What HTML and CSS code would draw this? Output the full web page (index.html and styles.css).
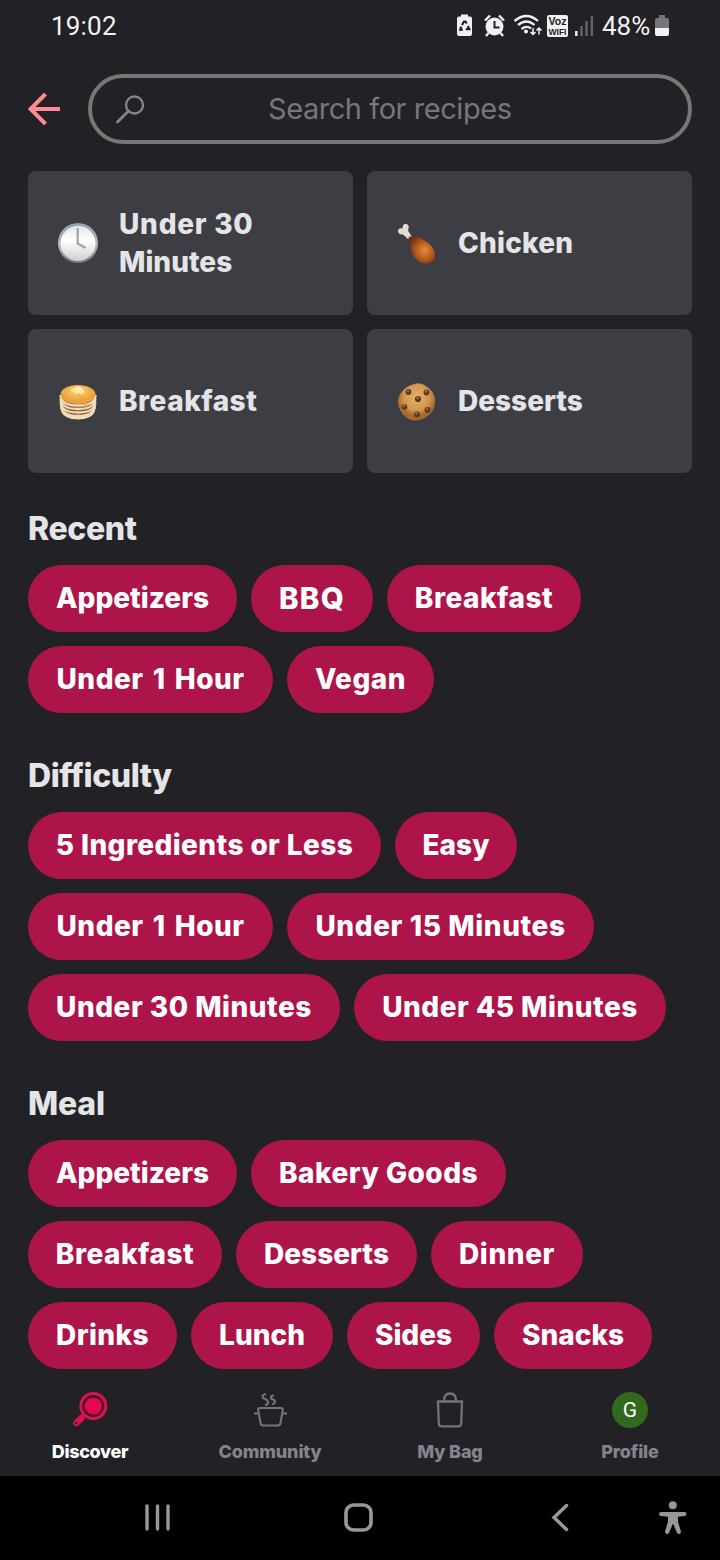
FILE: index.html
```html
<!DOCTYPE html>
<html lang="en">
<head>
<meta charset="utf-8">
<meta name="viewport" content="width=device-width">
<title>Search recipes</title>
<link rel="stylesheet" href="styles.css">
</head>
<body>
<div class="status">
  <span class="time">19:02</span>
  <svg class="status-icons" width="140" height="28" viewBox="456 12 140 28">
    <path fill="#f1f1f3" d="M461 14.500h7v2h2a2 2 0 0 1 2 2V34a2 2 0 0 1-2 2h-11a2 2 0 0 1-2-2V18.500a2 2 0 0 1 2-2h2z"/>
    <g fill="none" stroke="#222126" stroke-width="2.200"><path d="M462 25l2-3.500h1.500l1.200 2M467.800 26l1.500 3.200h-3.500M462.800 29.600h-2.600l1-3"/></g>
    <path d="M494.500 17.500a9 9 0 0 1 0 18a9 9 0 0 1 0-18z" fill="#f1f1f3"/>
    <path d="M494.500 21v6.500h5" fill="none" stroke="#222126" stroke-width="2"/>
    <path d="M485 20.500l5-5M504 20.500l-5-5M488.500 33l-2.500 3M500.500 33l2.500 3" stroke="#f1f1f3" stroke-width="2.400"/>
    <g fill="none" stroke="#f1f1f3" stroke-width="2.300"><path d="M514.500 21q12-10 23.500 0M518 25q8.500-7 16.500 0M521.500 29q5-4 9.500-.5"/></g>
    <circle cx="526" cy="31.500" r="2" fill="#f1f1f3"/>
    <path d="M533 28v6M530.500 32l2.500 2.500 2.500-2.500M539 34.500v-6M536.500 30.500l2.500-2.500 2.500 2.500" fill="none" stroke="#f1f1f3" stroke-width="1.500"/>
    <rect x="547" y="15" width="21" height="22" rx="2" fill="#f1f1f3"/>
    <text x="548.500" y="25" class="voz" textLength="18" lengthAdjust="spacingAndGlyphs">Voz</text>
    <text x="548.500" y="35" class="wifi" textLength="18" lengthAdjust="spacingAndGlyphs">WIFI</text>
    <path d="M576.300 31v5" stroke="#f1f1f3" stroke-width="2.500"/>
    <path d="M581.500 26v10M586.500 21v15M591.800 16v20" stroke="#66656a" stroke-width="2.300"/>
  </svg>
  <span class="percent">48%</span>
  <svg class="battery" width="14" height="22" viewBox="0 0 14 22"><path fill="#77767a" d="M4 0h6v3h2a2 2 0 0 1 2 2v8H0V5a2 2 0 0 1 2-2h2z"/><path fill="#f1f1f3" d="M0 13h14v6a2 2 0 0 1-2 2H2a2 2 0 0 1-2-2z"/></svg>
</div>
<header class="top">
  <svg class="back" width="32" height="32" viewBox="0 0 32 32"><path d="M17.500 1L2.500 16l15 15M2.500 16H32" fill="none" stroke="#ff8a91" stroke-width="4"/></svg>
  <div class="search">
    <svg class="lens" width="30" height="30" viewBox="0 0 30 30" fill="none" stroke="#85838e"><circle cx="19.500" cy="11" r="8.500" stroke-width="2.400"/><path d="M13.500 17L2.500 28" stroke-width="3" stroke-linecap="round"/></svg>
    <span class="placeholder">Search for recipes</span>
  </div>
</header>
<main>
  <div class="cards">
    <div class="card">
      <svg class="emoji" width="40" height="42" viewBox="0 0 40 42">
        <defs><linearGradient id="rim" x2="0" y2="1"><stop stop-color="#8fa3b8"/><stop offset=".55" stop-color="#b9b9b9"/><stop offset="1" stop-color="#74777a"/></linearGradient><linearGradient id="face" x2="0" y2="1"><stop stop-color="#e3e7ea"/><stop offset=".4" stop-color="#fff"/><stop offset="1" stop-color="#cfcfcf"/></linearGradient></defs>
        <circle cx="20" cy="21" r="20" fill="url(#rim)"/><circle cx="20" cy="21.500" r="17.500" fill="url(#face)"/>
        <path d="M19.700 6v15.500l8 4.500" fill="none" stroke="#a2a3a3" stroke-width="2.200"/>
      </svg>
      <span class="card-label"><span class="c-under">Under 30</span><br><span class="c-minutes">Minutes</span></span>
    </div>
    <div class="card">
      <svg class="emoji" width="40" height="42" viewBox="0 0 40 42">
        <defs><radialGradient id="leg" cx=".6" cy=".52" r=".62"><stop stop-color="#e98b3c"/><stop offset=".5" stop-color="#b85c20"/><stop offset="1" stop-color="#6d2e12"/></radialGradient></defs>
        <path d="M11 17L6 12.500Q1 13 1 8.500 2 5.500 5.500 6.500 6 1 9.500 2q3.500 1 1.500 6.500L15 15z" fill="#e3ddd0"/>
        <path d="M11.500 15q8-2.500 16 3.500c8 5 11 10 10.500 16-1 6-5 7-10.500 7-8-1-13-9-14-17q-.5-6-2-9.500z" fill="url(#leg)"/>
      </svg>
      <span class="card-label c-chicken">Chicken</span>
    </div>
    <div class="card">
      <svg class="emoji" width="40" height="42" viewBox="0 0 40 42">
        <defs><radialGradient id="pan" cy=".35"><stop stop-color="#ffd46b"/><stop offset="1" stop-color="#e9a13a"/></radialGradient></defs>
        <path d="M2.500 16v13q0 9 17.500 9t17.500-9V16z" fill="#8f5f38"/>
        <g fill="none" stroke="#f0dcb8" stroke-width="2.300"><path d="M2.500 15q0 10.500 17.500 10.500t17.500-10.500M2.500 19q1 10 17.500 10t17.500-10M2.500 22.500q1 10 17.500 10t17.500-10M3 26.200q1 9.800 17 9.800t17-9.800M4 30.500q3 7.800 16 7.800t16-7.800"/></g>
        <ellipse cx="20" cy="14.500" rx="17.500" ry="9.500" fill="url(#pan)"/>
        <path d="M12 9l8-3 7 6-6 4-7-4z" fill="#ffe08c"/><path d="M18 6.500l6 1 2 4-5 2-4-3z" fill="#ffebb0"/>
        <path d="M20 14q8 5 7.500 13" fill="none" stroke="#efa72d" stroke-width="2"/>
      </svg>
      <span class="card-label c-breakfast">Breakfast</span>
    </div>
    <div class="card">
      <svg class="emoji cookie" width="40" height="42" viewBox="0 0 40 42">
        <defs><radialGradient id="cook" cy=".38"><stop stop-color="#e6b26a"/><stop offset=".7" stop-color="#d1964d"/><stop offset="1" stop-color="#a8692d"/></radialGradient></defs>
        <path d="M17 2q7-2 12 2 7 4 9 12 1 9-4 15-6 7-15 7.500-8 0-13-6Q0 25 1 17 5 5 17 2z" fill="url(#cook)"/>
        <g fill="#5f3922"><circle cx="11.500" cy="10" r="2.900"/><circle cx="29.500" cy="10.500" r="2.900"/><circle cx="21" cy="17" r="3.100"/><circle cx="7.500" cy="25" r="2.800"/><circle cx="30.500" cy="28" r="3"/><circle cx="20" cy="32.500" r="3"/></g>
        <g fill="#94704c"><circle cx="11" cy="9" r="1.200"/><circle cx="29" cy="9.500" r="1.200"/><circle cx="20.500" cy="16" r="1.300"/><circle cx="7" cy="24" r="1.200"/><circle cx="30" cy="27" r="1.200"/><circle cx="19.500" cy="31.500" r="1.200"/></g>
      </svg>
      <span class="card-label c-desserts">Desserts</span>
    </div>
  </div>
  <section class="recent">
    <h2 class="h-recent">Recent</h2>
    <div class="row"><span class="pill appetizers">Appetizers</span><span class="pill bbq">BBQ</span><span class="pill breakfast">Breakfast</span></div>
    <div class="row"><span class="pill hour">Under 1 Hour</span><span class="pill vegan">Vegan</span></div>
  </section>
  <section>
    <h2 class="h-difficulty">Difficulty</h2>
    <div class="row"><span class="pill ingredients">5 Ingredients or Less</span><span class="pill easy">Easy</span></div>
    <div class="row"><span class="pill hour">Under 1 Hour</span><span class="pill min15">Under 15 Minutes</span></div>
    <div class="row"><span class="pill min30">Under 30 Minutes</span><span class="pill min45">Under 45 Minutes</span></div>
  </section>
  <section>
    <h2 class="h-meal">Meal</h2>
    <div class="row"><span class="pill appetizers">Appetizers</span><span class="pill bakery">Bakery Goods</span></div>
    <div class="row"><span class="pill breakfast">Breakfast</span><span class="pill desserts">Desserts</span><span class="pill dinner">Dinner</span></div>
    <div class="row"><span class="pill drinks">Drinks</span><span class="pill lunch">Lunch</span><span class="pill sides">Sides</span><span class="pill snacks">Snacks</span></div>
  </section>
</main>
<nav class="tabs">
  <div class="tab active">
    <svg width="36" height="36" viewBox="0 0 36 36"><path d="M14 21.500L9 26.500" stroke="#d8134f" stroke-width="4"/><path d="M9.500 26L4.500 31" stroke="#d8134f" stroke-width="6.400" stroke-linecap="round"/><circle cx="21.300" cy="14" r="12.500" fill="#4a1028" stroke="#d8134f" stroke-width="3"/><circle cx="21.300" cy="14" r="8.600" fill="#e60751"/><circle cx="4.300" cy="31" r="1.200" fill="#3a1226"/></svg>
    <span class="tab-label t-discover">Discover</span>
  </div>
  <div class="tab">
    <svg width="36" height="36" viewBox="0 0 36 36" fill="none" stroke="#747375" stroke-width="2.100"><path d="M8 16h21q2 0 1.800 2L28.500 31q-.5 2.500-3 2.500H11.500Q9 33.500 8.500 31L6.200 18q-.2-2 1.800-2zM2 21.500h5M30 21.500h5"/><path d="M14 2q-5 1-3 4 4.500 1.500 5 4 0 3-3 3M22 3.500q-4 0-3 3 4 1 4 3.500-.5 2-3 2"/></svg>
    <span class="tab-label t-community">Community</span>
  </div>
  <div class="tab">
    <svg width="36" height="36" viewBox="0 0 36 36" fill="none" stroke="#747375" stroke-width="2.300"><path d="M6 9.500h24l-.8 22q-.2 2.800-2.800 2.800H9.600q-2.600 0-2.800-2.800zM12 9q0-7.500 6-7.500T24 9"/></svg>
    <span class="tab-label t-bag">My Bag</span>
  </div>
  <div class="tab">
    <span class="avatar">G</span>
    <span class="tab-label t-profile">Profile</span>
  </div>
</nav>
<footer class="system">
  <svg width="720" height="84" viewBox="0 0 720 84" fill="none" stroke="#979797" stroke-linecap="round">
    <path d="M147 30v23M157.500 30v23M168 30v23" stroke-width="3.400"/>
    <rect x="346" y="29" width="25" height="25" rx="7.500" stroke-width="3.700"/>
    <path d="M566.500 29.500L554 41.500l12.500 12" stroke-width="3.500"/>
    <g stroke="none" fill="#979797"><circle cx="672.800" cy="29.200" r="4"/><path d="M661 36h23.500a2 2 0 0 1 0 4l-6.500.8v5l3 10q0 2-2 2.200-1.500 0-2-1.200L673 47.500 669 57q-.7 1.200-2 1-2-.2-2-2.200l3-10v-5l-7-.8a2 2 0 0 1 0-4z"/></g>
  </svg>
</footer>
</body>
</html>
```
FILE: styles.css
```css
* { box-sizing: border-box; }
body { margin: 0; width: 720px; height: 1560px; display: flex; flex-direction: column; overflow: hidden; background: #222126; color: #e5e5e8; font-family: Inter, "Liberation Sans", sans-serif; }
svg { display: block; flex: none; }
.status { height: 52px; display: flex; align-items: center; padding-left: 51px; font: 26px Roboto, sans-serif; color: #f1f1f3; }
.time { width: 405px; letter-spacing: .2px; }
.percent { width: 53px; margin-left: 6px; letter-spacing: 0; }
.voz, .wifi { font: 700 10.500px "Liberation Sans", sans-serif; fill: #222126; }
.wifi { font-size: 8.500px; }
.top { height: 119px; display: flex; align-items: center; padding: 0 28px 5px; }
.search { width: 604px; height: 70px; margin-left: 28px; border: 4px solid #777; border-radius: 35px; display: flex; align-items: center; padding-left: 23px; }
.placeholder { flex: 1; padding-left: 123px; font-size: 29px; color: #777679; white-space: nowrap; letter-spacing: -.45px; margin-top: -1px; }
main { padding: 0 28px; }
.cards { display: grid; grid-template-columns: 325px 325px; grid-auto-rows: 144px; gap: 14px; }
.card { background: #3d3e43; border-radius: 8px; display: flex; align-items: center; padding-left: 30px; gap: 21px; }
.card-label { font-size: 28px; line-height: 38px; font-weight: 800; white-space: nowrap; }
.c-under { letter-spacing: .75px; }
.c-chicken { letter-spacing: .2px; }
.c-breakfast { letter-spacing: .5px; }
.cookie { margin-top: 3px; }
h2 { margin: 0; height: 99px; padding-top: 43px; font-size: 32px; line-height: 40px; font-weight: 800; }
.h-recent { letter-spacing: -.4px; }
.h-difficulty { letter-spacing: -.45px; }
.h-meal { letter-spacing: -.2px; }
.recent h2 { height: 92px; padding-top: 36px; }
.row { display: flex; gap: 14px; margin-bottom: 14px; }
.row:last-child { margin-bottom: 0; }
.pill { height: 67px; border-radius: 34px; background: #ad144a; color: #fff; font-size: 28px; font-weight: 800; line-height: 67px; text-align: center; white-space: nowrap; }
.appetizers { width: 209px; }
.bbq { width: 122px; font-size: 29.500px; letter-spacing: 1.200px; }
.breakfast { width: 194px; letter-spacing: .5px; }
.hour { width: 245px; letter-spacing: .5px; word-spacing: 2.500px; }
.vegan { width: 147px; letter-spacing: .5px; }
.ingredients { width: 353px; letter-spacing: .4px; }
.easy { width: 122px; }
.min15 { width: 307px; letter-spacing: .6px; }
.min30, .min45 { width: 312px; letter-spacing: .5px; }
.bakery { width: 255px; letter-spacing: .5px; }
.desserts { width: 181px; }
.dinner { width: 152px; letter-spacing: .6px; }
.drinks { width: 149px; letter-spacing: .4px; }
.lunch { width: 142px; }
.sides { width: 133px; }
.snacks { width: 158px; }
.tabs { height: 107px; display: grid; grid-template-columns: repeat(4, 180px); padding-top: 23px; }
.tab { display: flex; flex-direction: column; align-items: center; color: #85838e; }
.active { color: #fff; }
.tab-label { margin-top: 12px; font-size: 18px; line-height: 24px; font-weight: 800; letter-spacing: -.15px; }
.t-discover { letter-spacing: -.35px; }
.avatar { width: 36px; height: 36px; border-radius: 50%; background: #33691e; color: #fff; font: 21px/37px Roboto, sans-serif; text-align: center; }
.system { height: 84px; background: #000; }
```
